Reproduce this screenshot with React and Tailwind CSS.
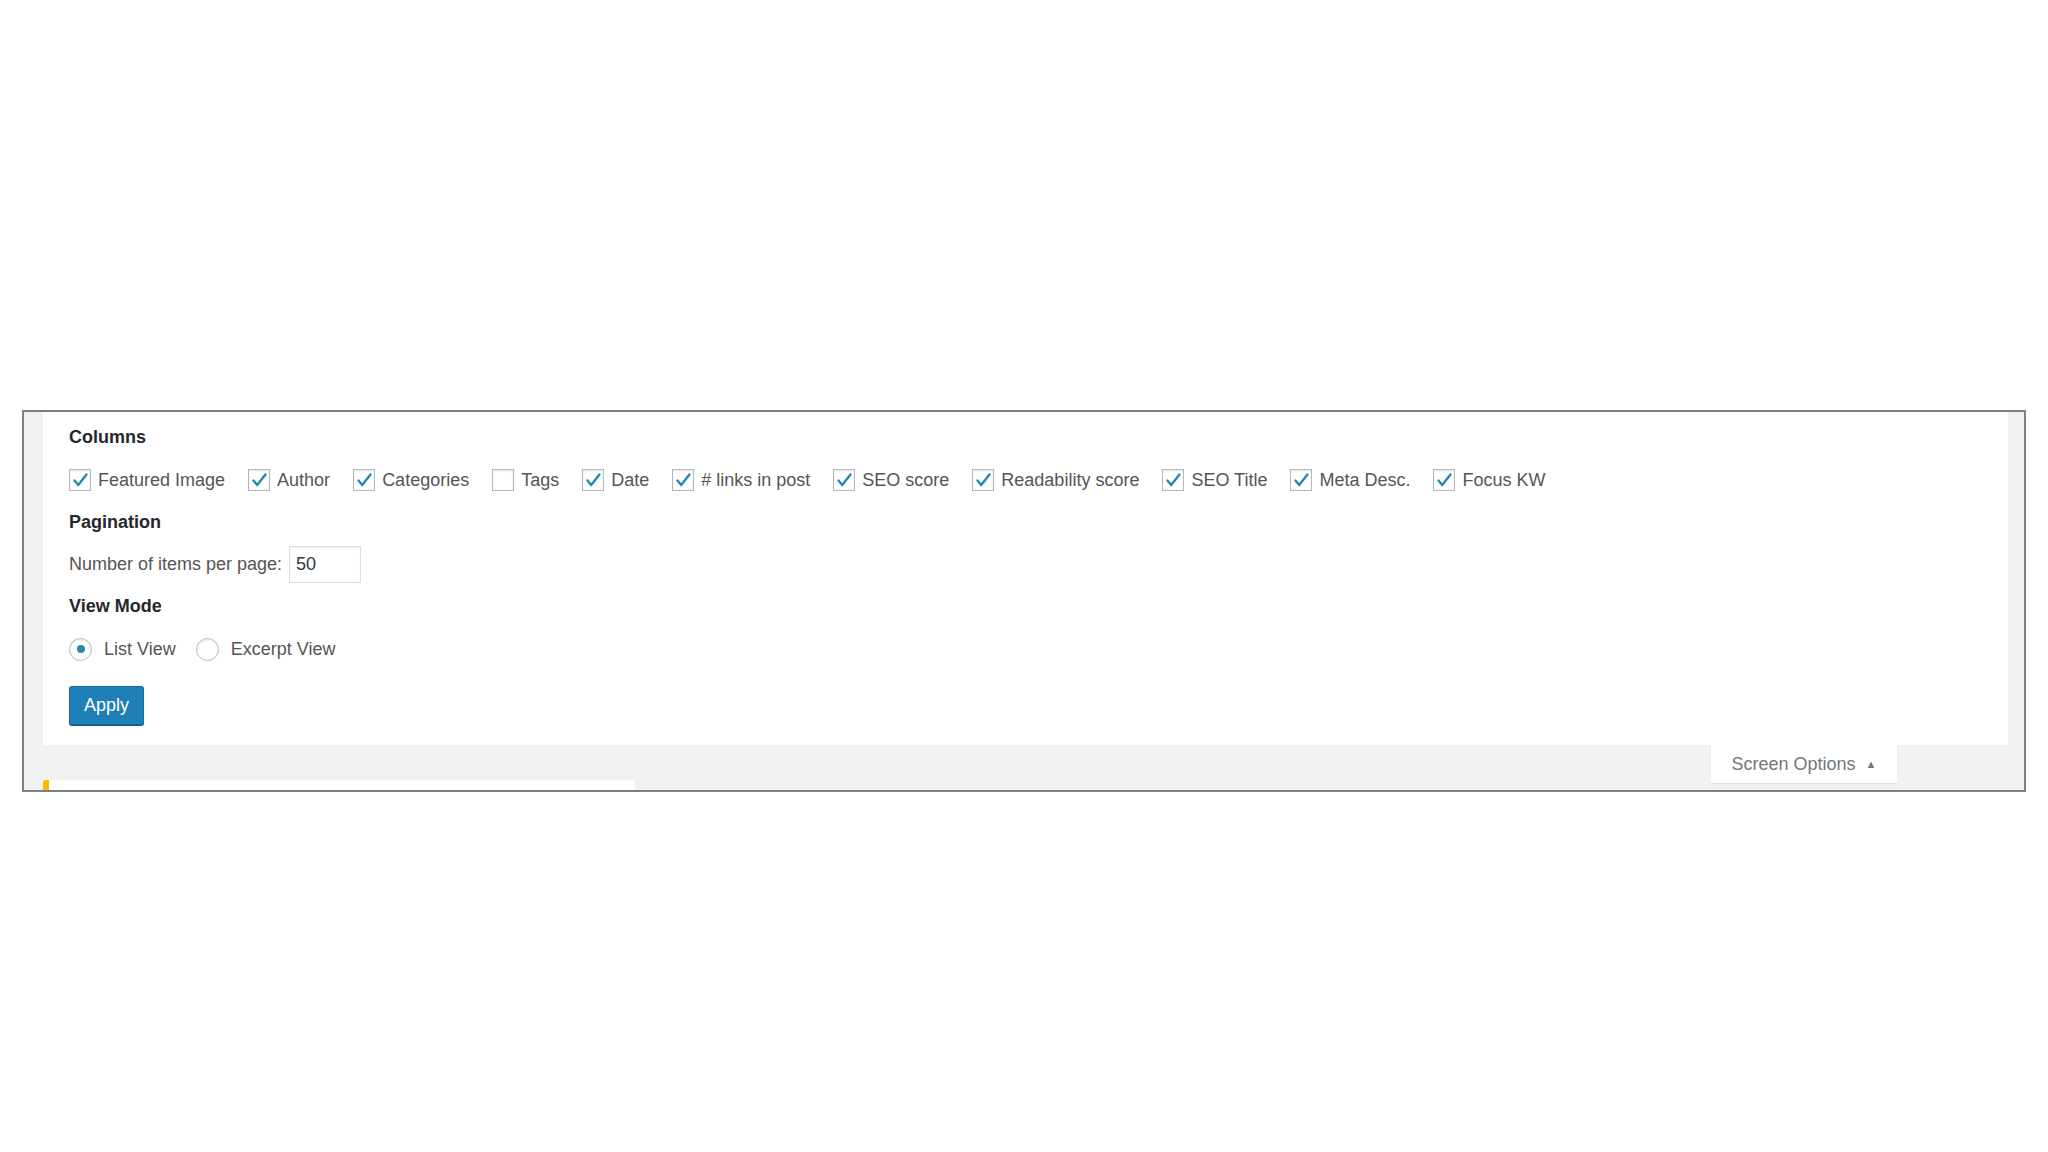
import React from 'react'

const COLUMNS = [
  { label: 'Featured Image', checked: true },
  { label: 'Author', checked: true },
  { label: 'Categories', checked: true },
  { label: 'Tags', checked: false },
  { label: 'Date', checked: true },
  { label: '# links in post', checked: true },
  { label: 'SEO score', checked: true },
  { label: 'Readability score', checked: true },
  { label: 'SEO Title', checked: true },
  { label: 'Meta Desc.', checked: true },
  { label: 'Focus KW', checked: true },
]

function Checkbox({ checked }) {
  return (
    <span className="w-[22px] h-[22px] shrink-0 bg-white border border-[#b4b9be] shadow-[inset_0_1px_2px_rgba(0,0,0,0.1)] flex items-center justify-center">
      {checked && (
        <svg width="20" height="20" viewBox="0 0 20 20" fill="none">
          <path d="M4.5 10.5 L8.2 15 L16.5 4.5" stroke="#2a86b5" strokeWidth="2.4" strokeLinecap="round" strokeLinejoin="round" />
        </svg>
      )}
    </span>
  )
}

function Radio({ checked, label }) {
  return (
    <label className="flex items-center gap-[12px] mr-[20px]">
      <span className="w-[23px] h-[23px] shrink-0 rounded-full bg-white border border-[#b4b9be] shadow-[inset_0_1px_2px_rgba(0,0,0,0.1)] flex items-center justify-center">
        {checked && <span className="w-[8px] h-[8px] rounded-full bg-[#2a86b5]" />}
      </span>
      <span>{label}</span>
    </label>
  )
}

export default function App() {
  return (
    <div className="w-[2048px] h-[1152px] bg-white pt-[410px] pl-[22px] font-['Liberation_Sans',Arial,sans-serif] text-[18px] text-[#555]">
      <div className="w-[2004px] h-[382px] border-2 border-[#7f7f7f] bg-[#f1f1f1] flex flex-col">

        {/* screen options panel */}
        <div className="ml-[19px] mr-[16px] h-[333px] bg-white pl-[26px] pt-[4px] flex flex-col">
          <div className="h-[42px] flex items-center font-bold text-[#23282d]">Columns</div>

          <div className="h-[44px] flex items-center">
            {COLUMNS.map((c) => (
              <label key={c.label} className="flex items-center gap-[7px] mr-[23px]">
                <Checkbox checked={c.checked} />
                <span className="whitespace-nowrap">{c.label}</span>
              </label>
            ))}
          </div>

          <div className="h-[40px] flex items-center font-bold text-[#23282d]">Pagination</div>

          <div className="h-[44px] flex items-center">
            <span>Number of items per page:</span>
            <span className="ml-[7px] w-[72px] h-[37px] border border-[#ddd] shadow-[inset_0_1px_2px_rgba(0,0,0,0.07)] flex items-center pl-[6px] text-[#32373c]">
              50
            </span>
          </div>

          <div className="h-[40px] flex items-center font-bold text-[#23282d]">View Mode</div>

          <div className="h-[46px] flex items-center">
            <Radio checked label="List View" />
            <Radio label="Excerpt View" />
          </div>

          <button className="mt-[14px] w-[75px] h-[39px] rounded-[3px] bg-[#1f80b8] border border-[#0f6fa3] border-b-[#0b6494] shadow-[0_1px_0_#0b6494] text-white text-[18px] flex items-center justify-center">
            Apply
          </button>
        </div>

        {/* bottom strip */}
        <div className="flex items-start h-[45px]">
          <div className="ml-[19px] mt-[35px] w-[592px] h-[10px] bg-white border-l-[6px] border-[#ffb900] rounded-tl-[3px]" />
          <div className="ml-[1076px] w-[186px] h-[38px] bg-white shadow-[0_1px_1px_rgba(0,0,0,0.08)] flex items-center justify-center gap-[10px] text-[#72777c]">
            <span>Screen Options</span>
            <span className="text-[11px] leading-none">▲</span>
          </div>
        </div>

      </div>
    </div>
  )
}
